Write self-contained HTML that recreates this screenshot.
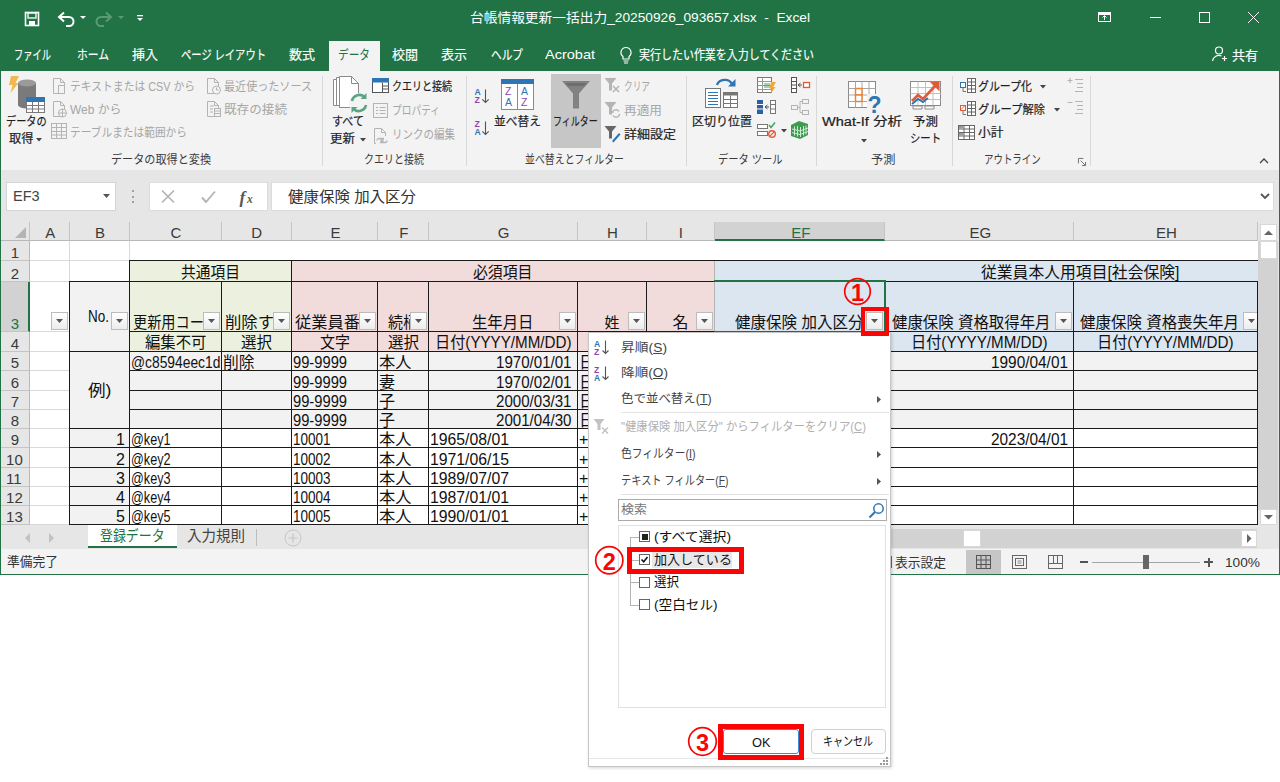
<!DOCTYPE html>
<html lang="ja"><head><meta charset="utf-8"><title>Excel</title><style>
html,body{margin:0;padding:0;background:#fff;}
body{width:1280px;height:782px;position:relative;overflow:hidden;font-family:"Liberation Sans","Noto Sans CJK JP",sans-serif;color:#222;}
div{position:absolute;box-sizing:border-box;}
.t{white-space:nowrap;line-height:1;}
.r{font-size:12px;color:#1e1e1e;-webkit-text-stroke:0.200px #1e1e1e;}
.rl{font-size:12px;color:#3c3c3c;}
.rd{font-size:12px;color:#a6a6a6;}
.c{font-size:15px;color:#111;white-space:nowrap;line-height:17px;overflow:hidden;}
.cc{overflow:hidden;white-space:nowrap;font-size:15px;line-height:17px;color:transparent;}
.cc span{position:absolute;top:0;font-size:16px;color:#111;transform-origin:0 0;}
.cc span.hd{top:1px;font-size:15px;color:#3a3a3a;}
.f{display:inline-block;}
div.f{display:block;}
svg{position:absolute;overflow:visible;}
</style></head><body>
<div style="left:0px;top:0px;width:1280px;height:575px;background:#f3f3f3;"></div>
<div style="left:0px;top:0px;width:1280px;height:71px;background:#217346;"></div>
<div class="t f" style="left:470px;top:11px;color:#fff;font-size:13px;white-space:pre;--w:340;transform-origin:0 0;">台帳情報更新一括出力_20250926_093657.xlsx  -  Excel</div>
<svg style="left:24px;top:10px" width="130" height="18" viewBox="0 0 130 18">
<rect x="1.5" y="2.5" width="13" height="13" fill="none" stroke="#fff" stroke-width="1.6"/>
<rect x="4" y="3" width="8" height="5" fill="none" stroke="#fff" stroke-width="1.3"/>
<rect x="5" y="11" width="6" height="4" fill="#fff"/>
<path d="M36 7 h9 a4.5 4.500 0 0 1 0 9 h-3" fill="none" stroke="#fff" stroke-width="2"/>
<path d="M40 2.500 L35 7 L40 11.500" fill="none" stroke="#fff" stroke-width="2"/>
<path d="M56 6 h6 l-3 3 z" fill="#fff"/>
<path d="M86 7 h-9 a4.500 4.500 0 0 0 0 9 h3" fill="none" stroke="#5c9a77" stroke-width="2"/>
<path d="M82 2.500 L87 7 L82 11.500" fill="none" stroke="#5c9a77" stroke-width="2"/>
<path d="M94 6 h6 l-3 3 z" fill="#5c9a77"/>
<rect x="113" y="5" width="6" height="1.300" fill="#fff"/>
<path d="M113 8 h6 l-3 3 z" fill="#fff"/>
</svg>
<svg style="left:1090px;top:7px" width="180" height="22" viewBox="0 0 180 22">
<rect x="8.500" y="5.500" width="12" height="9" fill="none" stroke="#fff" stroke-width="1"/>
<rect x="8.500" y="5.500" width="12" height="2.500" fill="#fff"/>
<path d="M14.500 13 v-4 M12.500 10.500 l2 -2 l2 2" stroke="#fff" fill="none" stroke-width="1"/>
<path d="M60 10.500 h11" stroke="#fff" stroke-width="1"/>
<rect x="109.500" y="5.500" width="10" height="10" fill="none" stroke="#fff" stroke-width="1"/>
<path d="M158 5 l11 11 M169 5 l-11 11" stroke="#fff" stroke-width="1"/>
</svg>
<div style="left:329px;top:41px;width:51px;height:30px;background:#f3f3f3;"></div>
<div class="t f" style="left:14px;top:48px;color:#fff;font-size:13px;-webkit-text-stroke:0.18px #fff;--w:37;transform-origin:0 0;">ファイル</div>
<div class="t f" style="left:77px;top:48px;color:#fff;font-size:13px;-webkit-text-stroke:0.18px #fff;--w:32;transform-origin:0 0;">ホーム</div>
<div class="t f" style="left:132px;top:48px;color:#fff;font-size:13px;-webkit-text-stroke:0.18px #fff;--w:26;transform-origin:0 0;">挿入</div>
<div class="t f" style="left:181px;top:48px;color:#fff;font-size:13px;-webkit-text-stroke:0.18px #fff;--w:85;transform-origin:0 0;">ページ レイアウト</div>
<div class="t f" style="left:289px;top:48px;color:#fff;font-size:13px;-webkit-text-stroke:0.18px #fff;--w:26;transform-origin:0 0;">数式</div>
<div class="t f" style="left:392px;top:48px;color:#fff;font-size:13px;-webkit-text-stroke:0.18px #fff;--w:26;transform-origin:0 0;">校閲</div>
<div class="t f" style="left:441px;top:48px;color:#fff;font-size:13px;-webkit-text-stroke:0.18px #fff;--w:26;transform-origin:0 0;">表示</div>
<div class="t f" style="left:491px;top:48px;color:#fff;font-size:13px;-webkit-text-stroke:0.18px #fff;--w:32;transform-origin:0 0;">ヘルプ</div>
<div id="f0" class="t f" style="left:545px;top:48px;color:#fff;font-size:13px;--w:50;transform-origin:0 0;transform:scaleX(1.1158);">Acrobat</div>
<div class="t f" style="left:338px;top:48px;color:#217346;font-size:13px;--w:32;transform-origin:0 0;">データ</div>
<svg style="left:619px;top:45.500px" width="14" height="20" viewBox="0 0 14 20">
<path d="M7 1.500 a5 5 0 0 1 3 9 v2.500 h-6 v-2.500 a5 5 0 0 1 3 -9 z" fill="none" stroke="#fff" stroke-width="1.200"/>
<path d="M4.500 15 h5 M5 17 h4" stroke="#fff" stroke-width="1.200"/></svg>
<div class="t f" style="left:639px;top:48px;color:#fff;font-size:13px;-webkit-text-stroke:0.18px #fff;--w:175;transform-origin:0 0;">実行したい作業を入力してください</div>
<svg style="left:1211px;top:45px" width="18" height="18" viewBox="0 0 18 18">
<circle cx="8" cy="5.500" r="3.500" fill="none" stroke="#fff" stroke-width="1.200"/>
<path d="M1.500 16 a6.500 6.500 0 0 1 9 -5" fill="none" stroke="#fff" stroke-width="1.200"/>
<path d="M11 13.500 h5 M13.500 11 v5" stroke="#fff" stroke-width="1.200"/></svg>
<div class="t f" style="left:1232px;top:49px;color:#fff;font-size:13px;-webkit-text-stroke:0.18px #fff;--w:26;transform-origin:0 0;">共有</div>
<div style="left:322px;top:76px;width:1px;height:90px;background:#d8d8d8;"></div>
<div style="left:466px;top:76px;width:1px;height:90px;background:#d8d8d8;"></div>
<div style="left:686px;top:76px;width:1px;height:90px;background:#d8d8d8;"></div>
<div style="left:816px;top:76px;width:1px;height:90px;background:#d8d8d8;"></div>
<div style="left:952px;top:76px;width:1px;height:90px;background:#d8d8d8;"></div>
<div style="left:1090px;top:76px;width:1px;height:90px;background:#d8d8d8;"></div>
<div class="t rl f" style="left:111.0px;top:154px;--w:100;transform-origin:0 0;">データの取得と変換</div>
<div class="t rl f" style="left:364.0px;top:154px;--w:60;transform-origin:0 0;">クエリと接続</div>
<div class="t rl f" style="left:525.0px;top:154px;--w:99;transform-origin:0 0;">並べ替えとフィルター</div>
<div class="t rl f" style="left:717.7px;top:154px;--w:64.6;transform-origin:0 0;">データ ツール</div>
<div class="t rl f" style="left:870.75px;top:154px;--w:24.5;transform-origin:0 0;">予測</div>
<div class="t rl f" style="left:983.65px;top:154px;--w:56.7;transform-origin:0 0;">アウトライン</div>
<svg style="left:7px;top:75px" width="40" height="42" viewBox="0 0 40 42">
<path d="M4 1 h8 l-3.500 7 h3 l-8 10 l2 -8 h-3.500 z" fill="#f0b84e"/>
<path d="M11 8 v22 a9 3.500 0 0 0 18 0 v-22" fill="#7a7a7a"/>
<ellipse cx="20" cy="8" rx="9" ry="3.500" fill="#9a9a9a"/>
<rect x="19.500" y="22.500" width="18" height="15" fill="#fff" stroke="#7a7a7a" stroke-width="1"/>
<rect x="19.500" y="22.500" width="18" height="4" fill="#2e75b6" stroke="#2e75b6" stroke-width="1"/>
<path d="M19.500 30.500 h18 M19.500 34 h18 M25.500 26.500 v11 M31.500 26.500 v11" stroke="#7a7a7a" stroke-width="1"/>
</svg>
<div class="t r f" style="left:6px;top:116px;--w:40.7;transform-origin:0 0;">データの</div>
<div class="t r f" style="left:9px;top:133px;--w:24.5;transform-origin:0 0;">取得</div>
<svg style="left:36px;top:138px" width="6" height="4"><path d="M0 0 h6 l-3 3.500 z" fill="#444"/></svg>
<svg style="left:52px;top:77px" width="16" height="18" viewBox="0 0 16 18"><path d="M1.500 1.500 h7 l4 4 v11 h-11 z M8.500 1.500 v4 h4" fill="none" stroke="#b4b4b4" stroke-width="1"/><rect x="6.500" y="8.500" width="6" height="8" fill="#f3f3f3" stroke="#b4b4b4"/></svg>
<div class="t rd f" style="left:70px;top:81px;--w:125;transform-origin:0 0;">テキストまたは CSV から</div>
<svg style="left:52px;top:100px" width="16" height="18" viewBox="0 0 16 18"><path d="M1.500 1.500 h7 l4 4 v11 h-11 z M8.500 1.500 v4 h4" fill="none" stroke="#b4b4b4" stroke-width="1"/><circle cx="10.500" cy="13" r="4" fill="#f3f3f3" stroke="#b4b4b4"/><path d="M6.500 13 h8 M10.500 9 v8" stroke="#b4b4b4"/></svg>
<div class="t rd f" style="left:70px;top:104px;--w:51.5;transform-origin:0 0;">Web から</div>
<svg style="left:50px;top:122px" width="18" height="18" viewBox="0 0 18 18"><rect x="1.500" y="1.500" width="15" height="15" fill="none" stroke="#b4b4b4"/><path d="M1.500 5.500 h15 M1.500 9.500 h15 M1.500 13 h15 M6.500 1.500 v15 M11.500 1.500 v15" stroke="#b4b4b4"/></svg>
<div class="t rd f" style="left:70px;top:127px;--w:117;transform-origin:0 0;">テーブルまたは範囲から</div>
<svg style="left:206px;top:77px" width="16" height="18" viewBox="0 0 16 18"><path d="M1.500 1.500 h7 l4 4 v11 h-11 z M8.500 1.500 v4 h4" fill="none" stroke="#b4b4b4" stroke-width="1"/><circle cx="10.500" cy="13" r="4" fill="#f3f3f3" stroke="#b4b4b4"/><path d="M10.500 10.500 v2.500 h2" fill="none" stroke="#b4b4b4"/></svg>
<div class="t rd f" style="left:224px;top:81px;--w:88;transform-origin:0 0;">最近使ったソース</div>
<svg style="left:206px;top:100px" width="16" height="18" viewBox="0 0 16 18"><path d="M1.500 1.500 h7 l4 4 v11 h-11 z M8.500 1.500 v4 h4" fill="none" stroke="#b4b4b4" stroke-width="1"/><path d="M4 6 h4 M4 9 h3 M4 12 h3" stroke="#b4b4b4"/><rect x="8.500" y="8.500" width="6" height="8" fill="#f3f3f3" stroke="#b4b4b4"/><path d="M8.500 11 h6 M8.500 13.500 h6" stroke="#b4b4b4"/></svg>
<div class="t rd f" style="left:224px;top:104px;--w:63;transform-origin:0 0;">既存の接続</div>
<svg style="left:332px;top:76px" width="38" height="38" viewBox="0 0 38 38">
<path d="M1.500 3.500 h13 l6 6 v20 h-19 z" fill="#fff" stroke="#8a8a8a"/>
<path d="M4.500 1.500 h13 l6 6 v22 h-19 z" fill="#fff" stroke="#8a8a8a"/>
<path d="M7.500 0.500 h12 l7 7 v24 h-19 z" fill="#fff" stroke="#8a8a8a"/>
<path d="M19.500 0.500 v7 h7" fill="none" stroke="#8a8a8a"/>
<circle cx="27" cy="27" r="10" fill="#f3f3f3"/>
<path d="M20 25 a7.500 7.500 0 0 1 13 -3.500" fill="none" stroke="#58a582" stroke-width="2.600"/>
<path d="M34.500 17 v6 h-6 z" fill="#58a582"/>
<path d="M34 29 a7.500 7.500 0 0 1 -13 3.500" fill="none" stroke="#58a582" stroke-width="2.600"/>
<path d="M19.500 37 v-6 h6 z" fill="#58a582"/>
</svg>
<div class="t r f" style="left:332px;top:116px;--w:32;transform-origin:0 0;">すべて</div>
<div class="t r f" style="left:330px;top:133px;--w:25;transform-origin:0 0;">更新</div>
<svg style="left:360px;top:138px" width="6" height="4"><path d="M0 0 h6 l-3 3.500 z" fill="#444"/></svg>
<svg style="left:372px;top:78px" width="18" height="16" viewBox="0 0 18 16"><rect x="0.500" y="0.500" width="16" height="14" fill="#fff" stroke="#555"/><rect x="0.500" y="0.500" width="16" height="3.500" fill="#2e75b6" stroke="#2e75b6"/><path d="M10.500 4.500 v10 M10.500 8 h6 M10.500 11 h6" stroke="#555"/></svg>
<div class="t r f" style="left:392px;top:81px;--w:60;transform-origin:0 0;">クエリと接続</div>
<svg style="left:373px;top:103px" width="16" height="16" viewBox="0 0 16 16"><rect x="0.500" y="0.500" width="14" height="14" fill="none" stroke="#b4b4b4"/><path d="M3 4.500 h2 M6.500 4.500 h6 M3 7.500 h2 M6.500 7.500 h6 M3 10.500 h2 M6.500 10.500 h6" stroke="#b4b4b4"/></svg>
<div class="t rd f" style="left:392px;top:105px;--w:48;transform-origin:0 0;">プロパティ</div>
<svg style="left:373px;top:127px" width="16" height="18" viewBox="0 0 16 18"><path d="M1.500 1.500 h7 l4 4 v11 h-11 z M8.500 1.500 v4 h4" fill="none" stroke="#b4b4b4" stroke-width="1"/><rect x="3" y="9" width="11" height="8" fill="#f3f3f3" stroke="none"/><path d="M4 13.500 a2 2 0 0 1 2 -2 h2 a2 2 0 0 1 0 4 h-1 M14 13.500 a2 2 0 0 1 -2 2 h-2 a2 2 0 0 1 0 -4 h1" fill="none" stroke="#b4b4b4" stroke-width="1.300"/></svg>
<div class="t rd f" style="left:392px;top:129px;--w:63;transform-origin:0 0;">リンクの編集</div>
<svg style="left:474px;top:88px" width="18" height="18" viewBox="0 0 18 18"><text x="0.500" y="7.200" font-size="8.600" font-weight="bold" font-family="Liberation Sans" fill="#2e75b6">A</text><text x="0.500" y="15" font-size="8.600" font-weight="bold" font-family="Liberation Sans" fill="#8e44ad">Z</text><path d="M11.500 1.500 v13 M8.300 11.300 l3.200 3.200 l3.200 -3.200" fill="none" stroke="#555" stroke-width="1.100"/></svg>
<svg style="left:474px;top:120px" width="18" height="18" viewBox="0 0 18 18"><text x="0.500" y="7.200" font-size="8.600" font-weight="bold" font-family="Liberation Sans" fill="#8e44ad">Z</text><text x="0.500" y="15" font-size="8.600" font-weight="bold" font-family="Liberation Sans" fill="#2e75b6">A</text><path d="M11.500 1.500 v13 M8.300 11.300 l3.200 3.200 l3.200 -3.200" fill="none" stroke="#555" stroke-width="1.100"/></svg>
<svg style="left:501px;top:79px" width="34" height="32" viewBox="0 0 34 32">
<rect x="0.500" y="0.500" width="32" height="30" fill="#fff" stroke="#8a8a8a"/>
<rect x="0.500" y="0.500" width="32" height="4" fill="#2e75b6" stroke="#2e75b6"/>
<path d="M16.500 4.500 v26" stroke="#8a8a8a"/>
<text x="4" y="16" font-size="10.500" font-family="Liberation Sans" fill="#8e44ad">Z</text>
<text x="4" y="27" font-size="10.500" font-family="Liberation Sans" fill="#2e75b6">A</text>
<text x="20" y="16" font-size="10.500" font-family="Liberation Sans" fill="#2e75b6">A</text>
<text x="20" y="27" font-size="10.500" font-family="Liberation Sans" fill="#8e44ad">Z</text>
</svg>
<div class="t r f" style="left:494px;top:116px;--w:47;transform-origin:0 0;">並べ替え</div>
<div style="left:551px;top:74px;width:50px;height:74px;background:#c6c6c6;"></div>
<svg style="left:561px;top:80px" width="30" height="30" viewBox="0 0 30 30"><path d="M1 1 h28 l-11 12.500 v15 h-6 v-15 z" fill="#828282"/><path d="M4.500 3 h21 l-2.500 3 h-16 z" fill="#6e6e6e"/></svg>
<div class="t r f" style="left:553px;top:116px;--w:44.6;transform-origin:0 0;">フィルター</div>
<svg style="left:604px;top:77px" width="18" height="18" viewBox="0 0 18 18"><path d="M0.500 1 h12 l-4.500 5.500 v7 h-3 v-7 z" fill="#b4b4b4"/><path d="M9 9 l6 6 M15 9 l-6 6" stroke="#b4b4b4" stroke-width="1.600"/></svg>
<div class="t rd f" style="left:624px;top:81px;--w:26;transform-origin:0 0;">クリア</div>
<svg style="left:604px;top:101px" width="18" height="18" viewBox="0 0 18 18"><path d="M0.500 1 h12 l-4.500 5.500 v7 h-3 v-7 z" fill="#b4b4b4"/><path d="M8.500 12 a3.500 3.500 0 0 1 6.500 -1.500 M15.500 13 a3.500 3.500 0 0 1 -6.500 1.500" fill="none" stroke="#b4b4b4" stroke-width="1.400"/></svg>
<div class="t rd f" style="left:624px;top:105px;--w:38;transform-origin:0 0;">再適用</div>
<svg style="left:604px;top:125px" width="18" height="18" viewBox="0 0 18 18"><path d="M0.500 1 h12 l-4.500 5.500 v7 h-3 v-7 z" fill="#666"/><path d="M8 16 l7 -8 l1.500 1.500 l-7 8 z" fill="#2e75b6"/></svg>
<div class="t r f" style="left:624px;top:129px;--w:52;transform-origin:0 0;">詳細設定</div>
<svg style="left:705px;top:76px" width="36" height="36" viewBox="0 0 36 36">
<path d="M12 9 a8 7 0 0 1 15 -1" fill="none" stroke="#2e75b6" stroke-width="2.400"/>
<path d="M30.500 3 v7.500 h-7.500 z" fill="#2e75b6"/>
<rect x="0.500" y="12.500" width="15" height="19" fill="#fff" stroke="#777"/>
<path d="M3 16.500 h10 M3 19.500 h10 M3 22.500 h10 M3 25.500 h10 M3 28.500 h10" stroke="#2e75b6" stroke-width="1.200"/>
<rect x="18.500" y="16.500" width="14" height="15" fill="#fff" stroke="#777"/>
<rect x="18.500" y="16.500" width="14" height="3" fill="#777"/>
<path d="M25.500 19.500 v12 M18.500 23.500 h14 M18.500 27.500 h14" stroke="#777"/>
</svg>
<div class="t r f" style="left:692px;top:116px;--w:60;transform-origin:0 0;">区切り位置</div>
<svg style="left:757px;top:77px" width="20" height="18" viewBox="0 0 20 18">
<rect x="0.500" y="0.500" width="14" height="15" fill="#fff" stroke="#777"/><path d="M0.500 4.500 h14 M0.500 8.500 h14 M0.500 12.500 h14 M5.500 0.500 v15" stroke="#999"/>
<rect x="7" y="6" width="6" height="5" fill="#4aa564" opacity=".5"/>
<path d="M14 5 h5 l-3 5 h2.500 l-5 7 l1.200 -5.500 h-2.200 z" fill="#f0a830"/></svg>
<svg style="left:757px;top:99px" width="20" height="18" viewBox="0 0 20 18">
<rect x="0" y="1" width="6" height="14" fill="#2e5f9e"/><path d="M0 5.500 h6 M0 10 h6" stroke="#fff"/>
<path d="M8 8 h4 M10.500 6 l-2.500 2 l2.500 2" stroke="#555" fill="none"/>
<rect x="13.500" y="1.500" width="5" height="13" fill="#fff" stroke="#777"/><path d="M13.500 5.500 h5 M13.500 10 h5" stroke="#777"/></svg>
<svg style="left:757px;top:121px" width="22" height="18" viewBox="0 0 22 18">
<rect x="0.500" y="3.500" width="10" height="4" fill="#fff" stroke="#777"/><rect x="0.500" y="10.500" width="10" height="4" fill="#fff" stroke="#777"/>
<path d="M12 4 l2 2.500 l4 -5" fill="none" stroke="#4aa564" stroke-width="1.600"/>
<circle cx="15" cy="13" r="3.300" fill="none" stroke="#e05a3a" stroke-width="1.400"/><path d="M12.700 15.300 l4.600 -4.600" stroke="#e05a3a" stroke-width="1.200"/></svg>
<svg style="left:781px;top:129px" width="6" height="4"><path d="M0 0 h6 l-3 3.500 z" fill="#444"/></svg>
<svg style="left:791px;top:77px" width="20" height="18" viewBox="0 0 20 18">
<rect x="0.500" y="0.500" width="5" height="15" fill="#fff" stroke="#555"/><path d="M0.500 4.500 h5 M0.500 8 h5 M0.500 11.500 h5" stroke="#555"/>
<path d="M7 8 h4 M9.500 6 l-2.500 2 l2.500 2" stroke="#555" fill="none"/>
<rect x="12.500" y="5.500" width="6" height="5" fill="#fff" stroke="#e05a3a" stroke-width="1.300"/></svg>
<svg style="left:791px;top:99px" width="20" height="18" viewBox="0 0 20 18">
<rect x="11.500" y="0.500" width="6" height="4" fill="none" stroke="#b4b4b4"/><rect x="0.500" y="6.500" width="6" height="4" fill="none" stroke="#b4b4b4"/><rect x="11.500" y="11.500" width="6" height="4" fill="none" stroke="#b4b4b4"/>
<path d="M6.500 8.500 h2.500 v-6 h2.500 M9 8.500 v5 h2.500" fill="none" stroke="#b4b4b4"/></svg>
<svg style="left:790px;top:120px" width="20" height="20" viewBox="0 0 20 20">
<path d="M1 5 l8 -4 l9 3 v11 l-8 4 l-9 -3 z" fill="#3d9b4f"/>
<path d="M4.500 6.500 v9 M7.500 6 v10.500 M10.500 7 v10 M13.500 6 v9.500 M16 5.500 v9 M2 9 l8 2 l8 -3 M2 12.500 l8 2 l8 -3" stroke="#cfe9d2" stroke-width="1" fill="none"/></svg>
<svg style="left:848px;top:81px" width="36" height="34" viewBox="0 0 36 34">
<rect x="0.500" y="0.500" width="27" height="26" fill="#fff" stroke="#8a8a8a"/>
<path d="M0.500 7.500 h27 M0.500 14 h27 M0.500 20.500 h27 M7.500 0.500 v26 M14 0.500 v26 M21 0.500 v26" stroke="#a8a8a8"/>
<rect x="7.500" y="7.500" width="6.500" height="6.500" fill="#fff" stroke="#e8853a" stroke-width="1.500"/>
<rect x="7.500" y="14" width="6.500" height="6.500" fill="#fff" stroke="#e8853a" stroke-width="1.500"/>
<rect x="19" y="13" width="17" height="21" fill="#f3f3f3" stroke="none"/>
<text x="19.500" y="32" font-size="23" font-weight="bold" font-family="Liberation Sans" fill="#2e75b6">?</text></svg>
<div class="t r f" style="left:822px;top:116px;--w:80;transform-origin:0 0;">What-If 分析</div>
<svg style="left:861px;top:139px" width="6" height="4"><path d="M0 0 h6 l-3 3.500 z" fill="#444"/></svg>
<svg style="left:910px;top:79px" width="34" height="34" viewBox="0 0 34 34">
<rect x="0.500" y="2.500" width="30" height="24" fill="#fff" stroke="#8a8a8a"/>
<path d="M0.500 8.500 h30 M0.500 14.500 h30 M0.500 20.500 h30 M8 2.500 v24 M15.500 2.500 v24 M23 2.500 v24" stroke="#c0c0c0"/>
<path d="M2 22 l6 -6 l5 4 l13 -14" fill="none" stroke="#e05a3a" stroke-width="2.600"/>
<path d="M20 3 h9.500 v9.500 z" fill="#e05a3a"/>
<path d="M2 25 l6 -5 l5 3 l5 -4" fill="none" stroke="#2e75b6" stroke-width="2"/>
<path d="M3 27 h9 v3 h-9 z M15 27 h9 v3 h-9 z" fill="#fff" stroke="#8a8a8a"/></svg>
<div class="t r f" style="left:913px;top:116px;--w:25;transform-origin:0 0;">予測</div>
<div class="t r f" style="left:910px;top:133px;--w:31;transform-origin:0 0;">シート</div>
<svg style="left:959px;top:78px" width="18" height="16" viewBox="0 0 18 16">
<rect x="1.500" y="4.500" width="5" height="5" fill="#fff" stroke="#2e75b6"/><path d="M4 9.500 v4 h3" fill="none" stroke="#777"/>
<rect x="8.500" y="0.500" width="8" height="14" fill="#fff" stroke="#666"/><path d="M8.500 4 h8 M8.500 7.500 h8 M8.500 11 h8 M12.500 0.500 v14" stroke="#666"/></svg>
<div class="t r f" style="left:978px;top:81px;--w:54;transform-origin:0 0;">グループ化</div>
<svg style="left:1040px;top:85px" width="6" height="4"><path d="M0 0 h6 l-3 3.500 z" fill="#444"/></svg>
<svg style="left:959px;top:101px" width="18" height="16" viewBox="0 0 18 16">
<rect x="1.500" y="4.500" width="5" height="5" fill="#fff" stroke="#e05a3a"/><path d="M2 8.500 l4 -4" stroke="#e05a3a"/><path d="M4 9.500 v4 h3" fill="none" stroke="#777"/>
<rect x="8.500" y="0.500" width="8" height="14" fill="#fff" stroke="#666"/><path d="M8.500 4 h8 M8.500 7.500 h8 M8.500 11 h8 M12.500 0.500 v14" stroke="#666"/></svg>
<div class="t r f" style="left:978px;top:104px;--w:67;transform-origin:0 0;">グループ解除</div>
<svg style="left:1054px;top:108px" width="6" height="4"><path d="M0 0 h6 l-3 3.500 z" fill="#444"/></svg>
<svg style="left:958px;top:125px" width="18" height="16" viewBox="0 0 18 16">
<rect x="0.500" y="0.500" width="16" height="14" fill="#fff" stroke="#666"/><path d="M0.500 4 h16 M0.500 7.500 h16 M0.500 11 h16 M6 0.500 v14 M11.500 0.500 v14" stroke="#666"/>
<rect x="1" y="1" width="4.500" height="2.500" fill="#999"/><rect x="1" y="8" width="4.500" height="2.500" fill="#999"/></svg>
<div class="t r f" style="left:978px;top:127px;--w:25.6;transform-origin:0 0;">小計</div>
<svg style="left:1068px;top:77px" width="16" height="16" viewBox="0 0 16 16"><path d="M2 1 v5 M-0.500 3.500 h5 M7 2.500 h8 M9 6.500 h6 M9 10.500 h6 M7 14.500 h8" stroke="#b4b4b4" stroke-width="1.200" fill="none"/></svg>
<svg style="left:1068px;top:99px" width="16" height="16" viewBox="0 0 16 16"><path d="M-0.500 3.500 h5 M7 2.500 h8 M9 6.500 h6 M9 10.500 h6 M7 14.500 h8" stroke="#b4b4b4" stroke-width="1.200" fill="none"/></svg>
<svg style="left:1078px;top:158px" width="8" height="8" viewBox="0 0 9 9"><path d="M0.500 6 v-5.500 h5.500 M3 3 l5 5 M8.500 4.500 v4 h-4" fill="none" stroke="#666"/></svg>
<svg style="left:1259px;top:157px" width="10" height="7" viewBox="0 0 10 7"><path d="M1 6 l4 -4 l4 4" fill="none" stroke="#444" stroke-width="1.300"/></svg>
<div style="left:1px;top:170px;width:1278px;height:71px;background:#e6e6e6;"></div>
<div style="left:6px;top:182px;width:110px;height:29px;background:#fff;border:1px solid #d4d4d4;"></div>
<div class="t" style="left:13px;top:189px;font-size:14.500px;color:#444;">EF3</div>
<svg style="left:103px;top:194px" width="8" height="5"><path d="M0 0 h7 l-3.500 4 z" fill="#555"/></svg>
<div style="left:131.5px;top:190px;width:2px;height:2px;background:#a0a0a0;"></div>
<div style="left:131.5px;top:195.5px;width:2px;height:2px;background:#a0a0a0;"></div>
<div style="left:131.5px;top:201px;width:2px;height:2px;background:#a0a0a0;"></div>
<div style="left:149px;top:182px;width:119px;height:29px;background:#fff;border:1px solid #dcdcdc;"></div>
<svg style="left:161px;top:189px" width="100" height="16" viewBox="0 0 100 16"><path d="M1 1.500 l12 12 M13 1.500 l-12 12" stroke="#b4b4b4" stroke-width="1.700"/><path d="M41 8.500 l4 4.500 l9 -10.500" fill="none" stroke="#b4b4b4" stroke-width="1.900"/><text x="78.500" y="13.500" font-size="17.500" font-style="italic" font-weight="bold" font-family="Liberation Serif" fill="#5a5a5a">f</text><text x="86" y="14" font-size="11.500" font-style="italic" font-weight="bold" font-family="Liberation Serif" fill="#5a5a5a">x</text></svg>
<div style="left:271px;top:182px;width:1003px;height:29px;background:#fff;border:1px solid #dcdcdc;"></div>
<div class="t f" style="left:288px;top:188.5px;font-size:15px;color:#333;--w:128;transform-origin:0 0;">健康保険 加入区分</div>
<svg style="left:1260px;top:193px" width="10" height="7" viewBox="0 0 10 7"><path d="M1 1 l4 4 l4 -4" fill="none" stroke="#555" stroke-width="1.800"/></svg>
<div style="left:30px;top:241px;width:1228px;height:284px;background:#fff;"></div>
<div style="left:30px;top:222px;width:40px;height:19px;background:#e6e6e6;border-right:1px solid #c4c4c4;border-bottom:1px solid #b8b8b8;"></div>
<div class="cc" style="left:30px;top:223px;width:40px;height:18px;"><span class="hd" style="left:15.22px;">A</span></div>
<div style="left:70px;top:222px;width:60px;height:19px;background:#e6e6e6;border-right:1px solid #c4c4c4;border-bottom:1px solid #b8b8b8;"></div>
<div class="cc" style="left:70px;top:223px;width:60px;height:18px;"><span class="hd" style="left:25.06px;">B</span></div>
<div style="left:130px;top:222px;width:92px;height:19px;background:#e6e6e6;border-right:1px solid #c4c4c4;border-bottom:1px solid #b8b8b8;"></div>
<div class="cc" style="left:130px;top:223px;width:92px;height:18px;"><span class="hd" style="left:40.56px;">C</span></div>
<div style="left:222px;top:222px;width:70px;height:19px;background:#e6e6e6;border-right:1px solid #c4c4c4;border-bottom:1px solid #b8b8b8;"></div>
<div class="cc" style="left:222px;top:223px;width:70px;height:18px;"><span class="hd" style="left:29.32px;">D</span></div>
<div style="left:292px;top:222px;width:86px;height:19px;background:#e6e6e6;border-right:1px solid #c4c4c4;border-bottom:1px solid #b8b8b8;"></div>
<div class="cc" style="left:292px;top:223px;width:86px;height:18px;"><span class="hd" style="left:38.54px;">E</span></div>
<div style="left:378px;top:222px;width:51px;height:19px;background:#e6e6e6;border-right:1px solid #c4c4c4;border-bottom:1px solid #b8b8b8;"></div>
<div class="cc" style="left:378px;top:223px;width:51px;height:18px;"><span class="hd" style="left:21.21px;">F</span></div>
<div style="left:429px;top:222px;width:149px;height:19px;background:#e6e6e6;border-right:1px solid #c4c4c4;border-bottom:1px solid #b8b8b8;"></div>
<div class="cc" style="left:429px;top:223px;width:149px;height:18px;"><span class="hd" style="left:68.85px;">G</span></div>
<div style="left:578px;top:222px;width:69px;height:19px;background:#e6e6e6;border-right:1px solid #c4c4c4;border-bottom:1px solid #b8b8b8;"></div>
<div class="cc" style="left:578px;top:223px;width:69px;height:18px;"><span class="hd" style="left:28.88px;">H</span></div>
<div style="left:647px;top:222px;width:68px;height:19px;background:#e6e6e6;border-right:1px solid #c4c4c4;border-bottom:1px solid #b8b8b8;"></div>
<div class="cc" style="left:647px;top:223px;width:68px;height:18px;"><span class="hd" style="left:31.83px;">I</span></div>
<div style="left:715px;top:222px;width:170px;height:19px;background:#d2d2d2;border-right:1px solid #c4c4c4;border-bottom:2px solid #217346;"></div>
<div class="cc" style="left:715px;top:223px;width:170px;height:18px;"><span class="hd" style="left:76.25px;color:#217346;">EF</span></div>
<div style="left:885px;top:222px;width:189px;height:19px;background:#e6e6e6;border-right:1px solid #c4c4c4;border-bottom:1px solid #b8b8b8;"></div>
<div class="cc" style="left:885px;top:223px;width:189px;height:18px;"><span class="hd" style="left:84.39px;">EG</span></div>
<div style="left:1074px;top:222px;width:184px;height:19px;background:#e6e6e6;border-right:1px solid #c4c4c4;border-bottom:1px solid #b8b8b8;"></div>
<div class="cc" style="left:1074px;top:223px;width:184px;height:18px;"><span class="hd" style="left:81.91px;">EH</span></div>
<div style="left:1px;top:222px;width:29px;height:19px;background:#e6e6e6;border-right:1px solid #c4c4c4;border-bottom:1px solid #b8b8b8;"></div>
<svg style="left:14px;top:226px" width="13" height="13"><path d="M12 1 v11 h-11 z" fill="#b4b4b4"/></svg>
<div style="left:1px;top:241px;width:29px;height:20px;background:#e6e6e6;border-bottom:1px solid #c4c4c4;border-right:1px solid #b8b8b8;"></div>
<div class="cc" style="left:1px;top:243px;width:29px;height:18px;"><span class="hd" style="left:9.78px;">1</span></div>
<div style="left:1px;top:261px;width:29px;height:21px;background:#e6e6e6;border-bottom:1px solid #c4c4c4;border-right:1px solid #b8b8b8;"></div>
<div class="cc" style="left:1px;top:264px;width:29px;height:18px;"><span class="hd" style="left:9.78px;">2</span></div>
<div style="left:1px;top:282px;width:29px;height:50px;background:#d2d2d2;border-bottom:1px solid #c4c4c4;border-right:2px solid #217346;"></div>
<div class="cc" style="left:1px;top:314px;width:29px;height:18px;"><span class="hd" style="left:9.78px;color:#217346;">3</span></div>
<div style="left:1px;top:332px;width:29px;height:20px;background:#e6e6e6;border-bottom:1px solid #c4c4c4;border-right:1px solid #b8b8b8;"></div>
<div class="cc" style="left:1px;top:334px;width:29px;height:18px;"><span class="hd" style="left:9.78px;">4</span></div>
<div style="left:1px;top:352px;width:29px;height:19px;background:#e6e6e6;border-bottom:1px solid #c4c4c4;border-right:1px solid #b8b8b8;"></div>
<div class="cc" style="left:1px;top:353px;width:29px;height:18px;"><span class="hd" style="left:9.78px;">5</span></div>
<div style="left:1px;top:371px;width:29px;height:20px;background:#e6e6e6;border-bottom:1px solid #c4c4c4;border-right:1px solid #b8b8b8;"></div>
<div class="cc" style="left:1px;top:373px;width:29px;height:18px;"><span class="hd" style="left:9.78px;">6</span></div>
<div style="left:1px;top:391px;width:29px;height:19px;background:#e6e6e6;border-bottom:1px solid #c4c4c4;border-right:1px solid #b8b8b8;"></div>
<div class="cc" style="left:1px;top:392px;width:29px;height:18px;"><span class="hd" style="left:9.78px;">7</span></div>
<div style="left:1px;top:410px;width:29px;height:19px;background:#e6e6e6;border-bottom:1px solid #c4c4c4;border-right:1px solid #b8b8b8;"></div>
<div class="cc" style="left:1px;top:411px;width:29px;height:18px;"><span class="hd" style="left:9.78px;">8</span></div>
<div style="left:1px;top:429px;width:29px;height:19px;background:#e6e6e6;border-bottom:1px solid #c4c4c4;border-right:1px solid #b8b8b8;"></div>
<div class="cc" style="left:1px;top:430px;width:29px;height:18px;"><span class="hd" style="left:9.78px;">9</span></div>
<div style="left:1px;top:448px;width:29px;height:20px;background:#e6e6e6;border-bottom:1px solid #c4c4c4;border-right:1px solid #b8b8b8;"></div>
<div class="cc" style="left:1px;top:450px;width:29px;height:18px;"><span class="hd" style="left:5.05px;">10</span></div>
<div style="left:1px;top:468px;width:29px;height:19px;background:#e6e6e6;border-bottom:1px solid #c4c4c4;border-right:1px solid #b8b8b8;"></div>
<div class="cc" style="left:1px;top:469px;width:29px;height:18px;"><span class="hd" style="left:5.05px;">11</span></div>
<div style="left:1px;top:487px;width:29px;height:19px;background:#e6e6e6;border-bottom:1px solid #c4c4c4;border-right:1px solid #b8b8b8;"></div>
<div class="cc" style="left:1px;top:488px;width:29px;height:18px;"><span class="hd" style="left:5.05px;">12</span></div>
<div style="left:1px;top:506px;width:29px;height:19px;background:#e6e6e6;border-bottom:1px solid #c4c4c4;border-right:1px solid #b8b8b8;"></div>
<div class="cc" style="left:1px;top:507px;width:29px;height:18px;"><span class="hd" style="left:5.05px;">13</span></div>
<div style="left:30px;top:260px;width:40px;height:1px;background:#d9d9d9;"></div>
<div style="left:30px;top:281px;width:40px;height:1px;background:#d9d9d9;"></div>
<div style="left:30px;top:331px;width:40px;height:1px;background:#d9d9d9;"></div>
<div style="left:30px;top:351px;width:40px;height:1px;background:#d9d9d9;"></div>
<div style="left:30px;top:370px;width:40px;height:1px;background:#d9d9d9;"></div>
<div style="left:30px;top:390px;width:40px;height:1px;background:#d9d9d9;"></div>
<div style="left:30px;top:409px;width:40px;height:1px;background:#d9d9d9;"></div>
<div style="left:30px;top:428px;width:40px;height:1px;background:#d9d9d9;"></div>
<div style="left:30px;top:447px;width:40px;height:1px;background:#d9d9d9;"></div>
<div style="left:30px;top:467px;width:40px;height:1px;background:#d9d9d9;"></div>
<div style="left:30px;top:486px;width:40px;height:1px;background:#d9d9d9;"></div>
<div style="left:30px;top:505px;width:40px;height:1px;background:#d9d9d9;"></div>
<div style="left:30px;top:524px;width:40px;height:1px;background:#d9d9d9;"></div>
<div style="left:69px;top:241px;width:1px;height:284px;background:#d9d9d9;"></div>
<div style="left:30px;top:260px;width:1227px;height:1px;background:#d9d9d9;"></div>
<div style="left:69px;top:281px;width:60px;height:1px;background:#d9d9d9;"></div>
<div style="left:129px;top:241px;width:1px;height:20px;background:#d9d9d9;"></div>
<div style="left:129px;top:260px;width:163px;height:22px;background:#ebf1de;border:1px solid #1a1a1a;"></div>
<div class="cc" style="left:130px;top:264px;width:161px;height:17px;"><span class="f" style="left:51px;--w:59;">共通項目</span></div>
<div style="left:291px;top:260px;width:424px;height:22px;background:#f2dcdb;border:1px solid #1a1a1a;"></div>
<div class="cc" style="left:292px;top:264px;width:422px;height:17px;"><span class="f" style="left:181.25px;--w:59.5;">必須項目</span></div>
<div style="left:714px;top:260px;width:544px;height:22px;background:#dce6f1;border:1px solid #1a1a1a;border-right:none;"></div>
<div class="cc" style="left:960px;top:264px;width:241px;height:17px;"><span class="f" style="left:21.25px;--w:198.5;">従業員本人用項目[社会保険]</span></div>
<div style="left:69px;top:281px;width:61px;height:71px;background:#f2f2f2;border:1px solid #1a1a1a;"></div>
<div class="cc" style="left:88px;top:308px;width:40px;height:17px;"><span class="f" style="left:0px;--w:21;">No.</span></div>
<div style="left:129px;top:281px;width:93px;height:51px;background:#ebf1de;border:1px solid #1a1a1a;"></div>
<div class="cc" style="left:130px;top:314px;width:73px;height:17px;"><span class="f" style="left:2.5px;--w:70.9;">更新用コー</span></div>
<div style="left:221px;top:281px;width:71px;height:51px;background:#ebf1de;border:1px solid #1a1a1a;"></div>
<div class="cc" style="left:222px;top:314px;width:51px;height:17px;"><span class="f" style="left:3px;--w:49.1;">削除す</span></div>
<div style="left:291px;top:281px;width:87px;height:51px;background:#f2dcdb;border:1px solid #1a1a1a;"></div>
<div class="cc" style="left:292px;top:314px;width:67px;height:17px;"><span class="f" style="left:3px;--w:65;">従業員番</span></div>
<div style="left:377px;top:281px;width:52px;height:51px;background:#f2dcdb;border:1px solid #1a1a1a;"></div>
<div class="cc" style="left:378px;top:314px;width:32px;height:17px;"><span class="f" style="left:9.5px;--w:30;">続柄</span></div>
<div style="left:428px;top:281px;width:150px;height:51px;background:#f2dcdb;border:1px solid #1a1a1a;"></div>
<div class="cc" style="left:429px;top:314px;width:148px;height:17px;"><span class="f" style="left:43.25px;--w:61.5;">生年月日</span></div>
<div style="left:577px;top:281px;width:70px;height:51px;background:#f2dcdb;border:1px solid #1a1a1a;"></div>
<div class="cc" style="left:578px;top:314px;width:68px;height:17px;"><span style="left:26.5px;font-size:15px;">姓</span></div>
<div style="left:646px;top:281px;width:69px;height:51px;background:#f2dcdb;border:1px solid #1a1a1a;"></div>
<div class="cc" style="left:647px;top:314px;width:67px;height:17px;"><span style="left:25.5px;">名</span></div>
<div style="left:714px;top:281px;width:171px;height:51px;background:#dce6f1;border:1px solid #1a1a1a;"></div>
<div class="cc" style="left:715px;top:314px;width:169px;height:17px;"><span class="f" style="left:20.25px;--w:128.5;">健康保険 加入区分</span></div>
<div style="left:884px;top:281px;width:190px;height:51px;background:#dce6f1;border:1px solid #1a1a1a;"></div>
<div class="cc" style="left:885px;top:314px;width:170px;height:17px;"><span class="f" style="left:6.5px;--w:158.5;">健康保険 資格取得年月</span></div>
<div style="left:1073px;top:281px;width:185px;height:51px;background:#dce6f1;border:1px solid #1a1a1a;"></div>
<div class="cc" style="left:1074px;top:314px;width:165px;height:17px;"><span class="f" style="left:6px;--w:159;">健康保険 資格喪失年月</span></div>
<div style="left:51px;top:312px;width:17px;height:18px;background:linear-gradient(#fff,#ececec);border:1px solid #bcbcbc;"></div>
<svg style="left:56px;top:319px" width="8" height="5"><path d="M0 0 h7 l-3.500 4 z" fill="#555"/></svg>
<div style="left:111px;top:312px;width:17px;height:18px;background:linear-gradient(#fff,#ececec);border:1px solid #bcbcbc;"></div>
<svg style="left:116px;top:319px" width="8" height="5"><path d="M0 0 h7 l-3.500 4 z" fill="#555"/></svg>
<div style="left:203px;top:312px;width:17px;height:18px;background:linear-gradient(#fff,#ececec);border:1px solid #bcbcbc;"></div>
<svg style="left:208px;top:319px" width="8" height="5"><path d="M0 0 h7 l-3.500 4 z" fill="#555"/></svg>
<div style="left:273px;top:312px;width:17px;height:18px;background:linear-gradient(#fff,#ececec);border:1px solid #bcbcbc;"></div>
<svg style="left:278px;top:319px" width="8" height="5"><path d="M0 0 h7 l-3.500 4 z" fill="#555"/></svg>
<div style="left:359px;top:312px;width:17px;height:18px;background:linear-gradient(#fff,#ececec);border:1px solid #bcbcbc;"></div>
<svg style="left:364px;top:319px" width="8" height="5"><path d="M0 0 h7 l-3.500 4 z" fill="#555"/></svg>
<div style="left:410px;top:312px;width:17px;height:18px;background:linear-gradient(#fff,#ececec);border:1px solid #bcbcbc;"></div>
<svg style="left:415px;top:319px" width="8" height="5"><path d="M0 0 h7 l-3.500 4 z" fill="#555"/></svg>
<div style="left:559px;top:312px;width:17px;height:18px;background:linear-gradient(#fff,#ececec);border:1px solid #bcbcbc;"></div>
<svg style="left:564px;top:319px" width="8" height="5"><path d="M0 0 h7 l-3.500 4 z" fill="#555"/></svg>
<div style="left:628px;top:312px;width:17px;height:18px;background:linear-gradient(#fff,#ececec);border:1px solid #bcbcbc;"></div>
<svg style="left:633px;top:319px" width="8" height="5"><path d="M0 0 h7 l-3.500 4 z" fill="#555"/></svg>
<div style="left:696px;top:312px;width:17px;height:18px;background:linear-gradient(#fff,#ececec);border:1px solid #bcbcbc;"></div>
<svg style="left:701px;top:319px" width="8" height="5"><path d="M0 0 h7 l-3.500 4 z" fill="#555"/></svg>
<div style="left:866px;top:312px;width:17px;height:18px;background:linear-gradient(#fff,#ececec);border:1px solid #bcbcbc;"></div>
<svg style="left:871px;top:319px" width="8" height="5"><path d="M0 0 h7 l-3.500 4 z" fill="#555"/></svg>
<div style="left:1055px;top:312px;width:17px;height:18px;background:linear-gradient(#fff,#ececec);border:1px solid #bcbcbc;"></div>
<svg style="left:1060px;top:319px" width="8" height="5"><path d="M0 0 h7 l-3.500 4 z" fill="#555"/></svg>
<div style="left:1243px;top:312px;width:14px;height:18px;background:linear-gradient(#fff,#ececec);border:1px solid #bcbcbc;border-right:none;"></div>
<svg style="left:1248px;top:319px" width="8" height="5"><path d="M0 0 h7 l-3.500 4 z" fill="#555"/></svg>
<div style="left:129px;top:331px;width:93px;height:21px;background:#ebf1de;border:1px solid #1a1a1a;"></div>
<div class="cc" style="left:130px;top:334px;width:91px;height:17px;"><span class="f" style="left:14.75px;--w:61.5;">編集不可</span></div>
<div style="left:221px;top:331px;width:71px;height:21px;background:#ebf1de;border:1px solid #1a1a1a;"></div>
<div class="cc" style="left:222px;top:334px;width:69px;height:17px;"><span class="f" style="left:19px;--w:31;">選択</span></div>
<div style="left:291px;top:331px;width:87px;height:21px;background:#f2dcdb;border:1px solid #1a1a1a;"></div>
<div class="cc" style="left:292px;top:334px;width:85px;height:17px;"><span class="f" style="left:27.5px;--w:30;">文字</span></div>
<div style="left:377px;top:331px;width:52px;height:21px;background:#f2dcdb;border:1px solid #1a1a1a;"></div>
<div class="cc" style="left:378px;top:334px;width:50px;height:17px;"><span class="f" style="left:9.5px;--w:31;">選択</span></div>
<div style="left:428px;top:331px;width:150px;height:21px;background:#f2dcdb;border:1px solid #1a1a1a;"></div>
<div class="cc" style="left:429px;top:334px;width:148px;height:17px;"><span class="f" style="left:5.75px;--w:136.5;">日付(YYYY/MM/DD)</span></div>
<div style="left:577px;top:331px;width:70px;height:21px;background:#f2dcdb;border:1px solid #1a1a1a;"></div>
<div style="left:646px;top:331px;width:69px;height:21px;background:#f2dcdb;border:1px solid #1a1a1a;"></div>
<div style="left:714px;top:331px;width:171px;height:21px;background:#dce6f1;border:1px solid #1a1a1a;"></div>
<div style="left:884px;top:331px;width:190px;height:21px;background:#dce6f1;border:1px solid #1a1a1a;"></div>
<div class="cc" style="left:885px;top:334px;width:188px;height:17px;"><span class="f" style="left:25.75px;--w:136.5;">日付(YYYY/MM/DD)</span></div>
<div style="left:1073px;top:331px;width:185px;height:21px;background:#dce6f1;border:1px solid #1a1a1a;"></div>
<div class="cc" style="left:1074px;top:334px;width:183px;height:17px;"><span class="f" style="left:23.25px;--w:136.5;">日付(YYYY/MM/DD)</span></div>
<div style="left:69px;top:351px;width:61px;height:78px;background:#f2f2f2;border:1px solid #1a1a1a;"></div>
<div class="cc" style="left:70px;top:382.0px;width:59px;height:17px;"><span class="f" style="left:17.75px;--w:23.5;">例)</span></div>
<div style="left:129px;top:351px;width:93px;height:20px;background:#f2f2f2;border:1px solid #1a1a1a;"></div>
<div class="cc" style="left:130px;top:354px;width:91px;height:17px;"><span class="f" style="left:1px;--w:89.4;">@c8594eec1d</span></div>
<div style="left:221px;top:351px;width:71px;height:20px;background:#f2f2f2;border:1px solid #1a1a1a;"></div>
<div class="cc" style="left:222px;top:354px;width:69px;height:17px;"><span class="f" style="left:1px;--w:31.5;">削除</span></div>
<div style="left:291px;top:351px;width:87px;height:20px;background:#f2f2f2;border:1px solid #1a1a1a;"></div>
<div class="cc" style="left:292px;top:354px;width:85px;height:17px;"><span class="f" style="left:1px;--w:54;">99-9999</span></div>
<div style="left:377px;top:351px;width:52px;height:20px;background:#f2f2f2;border:1px solid #1a1a1a;"></div>
<div class="cc" style="left:378px;top:354px;width:50px;height:17px;"><span class="f" style="left:1px;--w:32.5;">本人</span></div>
<div style="left:428px;top:351px;width:150px;height:20px;background:#f2f2f2;border:1px solid #1a1a1a;"></div>
<div class="cc" style="left:429px;top:354px;width:148px;height:17px;"><span class="f" style="left:66.5px;--w:75.5;">1970/01/01</span></div>
<div style="left:577px;top:351px;width:70px;height:20px;background:#f2f2f2;border:1px solid #1a1a1a;"></div>
<div class="cc" style="left:578px;top:354px;width:68px;height:17px;"><span style="left:1px;">日</span></div>
<div style="left:646px;top:351px;width:69px;height:20px;background:#f2f2f2;border:1px solid #1a1a1a;"></div>
<div style="left:714px;top:351px;width:171px;height:20px;background:#f2f2f2;border:1px solid #1a1a1a;"></div>
<div style="left:884px;top:351px;width:190px;height:20px;background:#f2f2f2;border:1px solid #1a1a1a;"></div>
<div class="cc" style="left:885px;top:354px;width:188px;height:17px;"><span class="f" style="left:106px;--w:77;">1990/04/01</span></div>
<div style="left:1073px;top:351px;width:185px;height:20px;background:#f2f2f2;border:1px solid #1a1a1a;"></div>
<div style="left:129px;top:370px;width:93px;height:21px;background:#f2f2f2;border:1px solid #1a1a1a;"></div>
<div style="left:221px;top:370px;width:71px;height:21px;background:#f2f2f2;border:1px solid #1a1a1a;"></div>
<div style="left:291px;top:370px;width:87px;height:21px;background:#f2f2f2;border:1px solid #1a1a1a;"></div>
<div class="cc" style="left:292px;top:374px;width:85px;height:17px;"><span class="f" style="left:1px;--w:54;">99-9999</span></div>
<div style="left:377px;top:370px;width:52px;height:21px;background:#f2f2f2;border:1px solid #1a1a1a;"></div>
<div class="cc" style="left:378px;top:374px;width:50px;height:17px;"><span style="left:1px;">妻</span></div>
<div style="left:428px;top:370px;width:150px;height:21px;background:#f2f2f2;border:1px solid #1a1a1a;"></div>
<div class="cc" style="left:429px;top:374px;width:148px;height:17px;"><span class="f" style="left:66.5px;--w:75.5;">1970/02/01</span></div>
<div style="left:577px;top:370px;width:70px;height:21px;background:#f2f2f2;border:1px solid #1a1a1a;"></div>
<div class="cc" style="left:578px;top:374px;width:68px;height:17px;"><span style="left:1px;">日</span></div>
<div style="left:646px;top:370px;width:69px;height:21px;background:#f2f2f2;border:1px solid #1a1a1a;"></div>
<div style="left:714px;top:370px;width:171px;height:21px;background:#f2f2f2;border:1px solid #1a1a1a;"></div>
<div style="left:884px;top:370px;width:190px;height:21px;background:#f2f2f2;border:1px solid #1a1a1a;"></div>
<div style="left:1073px;top:370px;width:185px;height:21px;background:#f2f2f2;border:1px solid #1a1a1a;"></div>
<div style="left:129px;top:390px;width:93px;height:20px;background:#f2f2f2;border:1px solid #1a1a1a;"></div>
<div style="left:221px;top:390px;width:71px;height:20px;background:#f2f2f2;border:1px solid #1a1a1a;"></div>
<div style="left:291px;top:390px;width:87px;height:20px;background:#f2f2f2;border:1px solid #1a1a1a;"></div>
<div class="cc" style="left:292px;top:393px;width:85px;height:17px;"><span class="f" style="left:1px;--w:54;">99-9999</span></div>
<div style="left:377px;top:390px;width:52px;height:20px;background:#f2f2f2;border:1px solid #1a1a1a;"></div>
<div class="cc" style="left:378px;top:393px;width:50px;height:17px;"><span style="left:1px;">子</span></div>
<div style="left:428px;top:390px;width:150px;height:20px;background:#f2f2f2;border:1px solid #1a1a1a;"></div>
<div class="cc" style="left:429px;top:393px;width:148px;height:17px;"><span class="f" style="left:66.5px;--w:75.5;">2000/03/31</span></div>
<div style="left:577px;top:390px;width:70px;height:20px;background:#f2f2f2;border:1px solid #1a1a1a;"></div>
<div class="cc" style="left:578px;top:393px;width:68px;height:17px;"><span style="left:1px;">日</span></div>
<div style="left:646px;top:390px;width:69px;height:20px;background:#f2f2f2;border:1px solid #1a1a1a;"></div>
<div style="left:714px;top:390px;width:171px;height:20px;background:#f2f2f2;border:1px solid #1a1a1a;"></div>
<div style="left:884px;top:390px;width:190px;height:20px;background:#f2f2f2;border:1px solid #1a1a1a;"></div>
<div style="left:1073px;top:390px;width:185px;height:20px;background:#f2f2f2;border:1px solid #1a1a1a;"></div>
<div style="left:129px;top:409px;width:93px;height:20px;background:#f2f2f2;border:1px solid #1a1a1a;"></div>
<div style="left:221px;top:409px;width:71px;height:20px;background:#f2f2f2;border:1px solid #1a1a1a;"></div>
<div style="left:291px;top:409px;width:87px;height:20px;background:#f2f2f2;border:1px solid #1a1a1a;"></div>
<div class="cc" style="left:292px;top:412px;width:85px;height:17px;"><span class="f" style="left:1px;--w:54;">99-9999</span></div>
<div style="left:377px;top:409px;width:52px;height:20px;background:#f2f2f2;border:1px solid #1a1a1a;"></div>
<div class="cc" style="left:378px;top:412px;width:50px;height:17px;"><span style="left:1px;">子</span></div>
<div style="left:428px;top:409px;width:150px;height:20px;background:#f2f2f2;border:1px solid #1a1a1a;"></div>
<div class="cc" style="left:429px;top:412px;width:148px;height:17px;"><span class="f" style="left:66.5px;--w:75.5;">2001/04/30</span></div>
<div style="left:577px;top:409px;width:70px;height:20px;background:#f2f2f2;border:1px solid #1a1a1a;"></div>
<div class="cc" style="left:578px;top:412px;width:68px;height:17px;"><span style="left:1px;">日</span></div>
<div style="left:646px;top:409px;width:69px;height:20px;background:#f2f2f2;border:1px solid #1a1a1a;"></div>
<div style="left:714px;top:409px;width:171px;height:20px;background:#f2f2f2;border:1px solid #1a1a1a;"></div>
<div style="left:884px;top:409px;width:190px;height:20px;background:#f2f2f2;border:1px solid #1a1a1a;"></div>
<div style="left:1073px;top:409px;width:185px;height:20px;background:#f2f2f2;border:1px solid #1a1a1a;"></div>
<div style="left:69px;top:428px;width:61px;height:20px;background:#f2f2f2;border:1px solid #1a1a1a;"></div>
<div class="cc" style="left:70px;top:431px;width:59px;height:17px;"><span style="left:45.92px;">1</span></div>
<div style="left:129px;top:428px;width:93px;height:20px;background:#fff;border:1px solid #1a1a1a;"></div>
<div class="cc" style="left:130px;top:431px;width:91px;height:17px;"><span class="f" style="left:1px;--w:39.5;">@key1</span></div>
<div style="left:221px;top:428px;width:71px;height:20px;background:#fff;border:1px solid #1a1a1a;"></div>
<div style="left:291px;top:428px;width:87px;height:20px;background:#fff;border:1px solid #1a1a1a;"></div>
<div class="cc" style="left:292px;top:431px;width:85px;height:17px;"><span class="f" style="left:1px;--w:37.5;">10001</span></div>
<div style="left:377px;top:428px;width:52px;height:20px;background:#fff;border:1px solid #1a1a1a;"></div>
<div class="cc" style="left:378px;top:431px;width:50px;height:17px;"><span class="f" style="left:1px;--w:32.5;">本人</span></div>
<div style="left:428px;top:428px;width:150px;height:20px;background:#fff;border:1px solid #1a1a1a;"></div>
<div class="cc" style="left:429px;top:431px;width:148px;height:17px;"><span class="f" style="left:1px;--w:79;">1965/08/01</span></div>
<div style="left:577px;top:428px;width:70px;height:20px;background:#fff;border:1px solid #1a1a1a;"></div>
<div class="cc" style="left:578px;top:431px;width:68px;height:17px;"><span style="left:1px;">+</span></div>
<div style="left:646px;top:428px;width:69px;height:20px;background:#fff;border:1px solid #1a1a1a;"></div>
<div style="left:714px;top:428px;width:171px;height:20px;background:#fff;border:1px solid #1a1a1a;"></div>
<div style="left:884px;top:428px;width:190px;height:20px;background:#fff;border:1px solid #1a1a1a;"></div>
<div class="cc" style="left:885px;top:431px;width:188px;height:17px;"><span class="f" style="left:106px;--w:77;">2023/04/01</span></div>
<div style="left:1073px;top:428px;width:185px;height:20px;background:#fff;border:1px solid #1a1a1a;"></div>
<div style="left:69px;top:447px;width:61px;height:21px;background:#f2f2f2;border:1px solid #1a1a1a;"></div>
<div class="cc" style="left:70px;top:451px;width:59px;height:17px;"><span style="left:45.92px;">2</span></div>
<div style="left:129px;top:447px;width:93px;height:21px;background:#fff;border:1px solid #1a1a1a;"></div>
<div class="cc" style="left:130px;top:451px;width:91px;height:17px;"><span class="f" style="left:1px;--w:39.5;">@key2</span></div>
<div style="left:221px;top:447px;width:71px;height:21px;background:#fff;border:1px solid #1a1a1a;"></div>
<div style="left:291px;top:447px;width:87px;height:21px;background:#fff;border:1px solid #1a1a1a;"></div>
<div class="cc" style="left:292px;top:451px;width:85px;height:17px;"><span class="f" style="left:1px;--w:37.5;">10002</span></div>
<div style="left:377px;top:447px;width:52px;height:21px;background:#fff;border:1px solid #1a1a1a;"></div>
<div class="cc" style="left:378px;top:451px;width:50px;height:17px;"><span class="f" style="left:1px;--w:32.5;">本人</span></div>
<div style="left:428px;top:447px;width:150px;height:21px;background:#fff;border:1px solid #1a1a1a;"></div>
<div class="cc" style="left:429px;top:451px;width:148px;height:17px;"><span class="f" style="left:1px;--w:79;">1971/06/15</span></div>
<div style="left:577px;top:447px;width:70px;height:21px;background:#fff;border:1px solid #1a1a1a;"></div>
<div class="cc" style="left:578px;top:451px;width:68px;height:17px;"><span style="left:1px;">+</span></div>
<div style="left:646px;top:447px;width:69px;height:21px;background:#fff;border:1px solid #1a1a1a;"></div>
<div style="left:714px;top:447px;width:171px;height:21px;background:#fff;border:1px solid #1a1a1a;"></div>
<div style="left:884px;top:447px;width:190px;height:21px;background:#fff;border:1px solid #1a1a1a;"></div>
<div style="left:1073px;top:447px;width:185px;height:21px;background:#fff;border:1px solid #1a1a1a;"></div>
<div style="left:69px;top:467px;width:61px;height:20px;background:#f2f2f2;border:1px solid #1a1a1a;"></div>
<div class="cc" style="left:70px;top:470px;width:59px;height:17px;"><span style="left:45.92px;">3</span></div>
<div style="left:129px;top:467px;width:93px;height:20px;background:#fff;border:1px solid #1a1a1a;"></div>
<div class="cc" style="left:130px;top:470px;width:91px;height:17px;"><span class="f" style="left:1px;--w:39.5;">@key3</span></div>
<div style="left:221px;top:467px;width:71px;height:20px;background:#fff;border:1px solid #1a1a1a;"></div>
<div style="left:291px;top:467px;width:87px;height:20px;background:#fff;border:1px solid #1a1a1a;"></div>
<div class="cc" style="left:292px;top:470px;width:85px;height:17px;"><span class="f" style="left:1px;--w:37.5;">10003</span></div>
<div style="left:377px;top:467px;width:52px;height:20px;background:#fff;border:1px solid #1a1a1a;"></div>
<div class="cc" style="left:378px;top:470px;width:50px;height:17px;"><span class="f" style="left:1px;--w:32.5;">本人</span></div>
<div style="left:428px;top:467px;width:150px;height:20px;background:#fff;border:1px solid #1a1a1a;"></div>
<div class="cc" style="left:429px;top:470px;width:148px;height:17px;"><span class="f" style="left:1px;--w:79;">1989/07/07</span></div>
<div style="left:577px;top:467px;width:70px;height:20px;background:#fff;border:1px solid #1a1a1a;"></div>
<div class="cc" style="left:578px;top:470px;width:68px;height:17px;"><span style="left:1px;">+</span></div>
<div style="left:646px;top:467px;width:69px;height:20px;background:#fff;border:1px solid #1a1a1a;"></div>
<div style="left:714px;top:467px;width:171px;height:20px;background:#fff;border:1px solid #1a1a1a;"></div>
<div style="left:884px;top:467px;width:190px;height:20px;background:#fff;border:1px solid #1a1a1a;"></div>
<div style="left:1073px;top:467px;width:185px;height:20px;background:#fff;border:1px solid #1a1a1a;"></div>
<div style="left:69px;top:486px;width:61px;height:20px;background:#f2f2f2;border:1px solid #1a1a1a;"></div>
<div class="cc" style="left:70px;top:489px;width:59px;height:17px;"><span style="left:45.92px;">4</span></div>
<div style="left:129px;top:486px;width:93px;height:20px;background:#fff;border:1px solid #1a1a1a;"></div>
<div class="cc" style="left:130px;top:489px;width:91px;height:17px;"><span class="f" style="left:1px;--w:39.5;">@key4</span></div>
<div style="left:221px;top:486px;width:71px;height:20px;background:#fff;border:1px solid #1a1a1a;"></div>
<div style="left:291px;top:486px;width:87px;height:20px;background:#fff;border:1px solid #1a1a1a;"></div>
<div class="cc" style="left:292px;top:489px;width:85px;height:17px;"><span class="f" style="left:1px;--w:37.5;">10004</span></div>
<div style="left:377px;top:486px;width:52px;height:20px;background:#fff;border:1px solid #1a1a1a;"></div>
<div class="cc" style="left:378px;top:489px;width:50px;height:17px;"><span class="f" style="left:1px;--w:32.5;">本人</span></div>
<div style="left:428px;top:486px;width:150px;height:20px;background:#fff;border:1px solid #1a1a1a;"></div>
<div class="cc" style="left:429px;top:489px;width:148px;height:17px;"><span class="f" style="left:1px;--w:79;">1987/01/01</span></div>
<div style="left:577px;top:486px;width:70px;height:20px;background:#fff;border:1px solid #1a1a1a;"></div>
<div class="cc" style="left:578px;top:489px;width:68px;height:17px;"><span style="left:1px;">+</span></div>
<div style="left:646px;top:486px;width:69px;height:20px;background:#fff;border:1px solid #1a1a1a;"></div>
<div style="left:714px;top:486px;width:171px;height:20px;background:#fff;border:1px solid #1a1a1a;"></div>
<div style="left:884px;top:486px;width:190px;height:20px;background:#fff;border:1px solid #1a1a1a;"></div>
<div style="left:1073px;top:486px;width:185px;height:20px;background:#fff;border:1px solid #1a1a1a;"></div>
<div style="left:69px;top:505px;width:61px;height:20px;background:#f2f2f2;border:1px solid #1a1a1a;"></div>
<div class="cc" style="left:70px;top:508px;width:59px;height:17px;"><span style="left:45.92px;">5</span></div>
<div style="left:129px;top:505px;width:93px;height:20px;background:#fff;border:1px solid #1a1a1a;"></div>
<div class="cc" style="left:130px;top:508px;width:91px;height:17px;"><span class="f" style="left:1px;--w:39.5;">@key5</span></div>
<div style="left:221px;top:505px;width:71px;height:20px;background:#fff;border:1px solid #1a1a1a;"></div>
<div style="left:291px;top:505px;width:87px;height:20px;background:#fff;border:1px solid #1a1a1a;"></div>
<div class="cc" style="left:292px;top:508px;width:85px;height:17px;"><span class="f" style="left:1px;--w:37.5;">10005</span></div>
<div style="left:377px;top:505px;width:52px;height:20px;background:#fff;border:1px solid #1a1a1a;"></div>
<div class="cc" style="left:378px;top:508px;width:50px;height:17px;"><span class="f" style="left:1px;--w:32.5;">本人</span></div>
<div style="left:428px;top:505px;width:150px;height:20px;background:#fff;border:1px solid #1a1a1a;"></div>
<div class="cc" style="left:429px;top:508px;width:148px;height:17px;"><span class="f" style="left:1px;--w:79;">1990/01/01</span></div>
<div style="left:577px;top:505px;width:70px;height:20px;background:#fff;border:1px solid #1a1a1a;"></div>
<div class="cc" style="left:578px;top:508px;width:68px;height:17px;"><span style="left:1px;">+</span></div>
<div style="left:646px;top:505px;width:69px;height:20px;background:#fff;border:1px solid #1a1a1a;"></div>
<div style="left:714px;top:505px;width:171px;height:20px;background:#fff;border:1px solid #1a1a1a;"></div>
<div style="left:884px;top:505px;width:190px;height:20px;background:#fff;border:1px solid #1a1a1a;"></div>
<div style="left:1073px;top:505px;width:185px;height:20px;background:#fff;border:1px solid #1a1a1a;"></div>
<div style="left:714px;top:261px;width:1px;height:71px;background:#b4b4b4;"></div>
<div style="left:714px;top:280px;width:172px;height:53px;border:2px solid #217346;border-left:none;"></div>
<div style="left:1258px;top:222px;width:21px;height:303px;background:#e6e6e6;"></div>
<div style="left:1258px;top:241px;width:20px;height:269px;background:#d2d2d2;"></div>
<div style="left:1260px;top:224px;width:17px;height:17px;background:#fff;border:1px solid #d8d8d8;"></div>
<svg style="left:1264px;top:230px" width="9" height="5"><path d="M0 5 h9 l-4.500 -4.500 z" fill="#666"/></svg>
<div style="left:1260px;top:241px;width:17px;height:18px;background:#fff;border:1px solid #d8d8d8;"></div>
<div style="left:1260px;top:509px;width:17px;height:16px;background:#fff;border:1px solid #d8d8d8;"></div>
<svg style="left:1264px;top:515px" width="9" height="5"><path d="M0 0 h9 l-4.500 4.500 z" fill="#666"/></svg>
<div style="left:1px;top:525px;width:1278px;height:24px;background:#e6e6e6;"></div>
<svg style="left:22px;top:532px" width="40" height="12"><path d="M8 1 v10 l-5 -5 z" fill="#c2c2c2"/><path d="M27 1 v10 l5 -5 z" fill="#c2c2c2"/></svg>
<div style="left:88px;top:525px;width:89px;height:23px;background:#fff;border-bottom:2px solid #217346;"></div>
<div class="t f" style="left:99.75px;top:527.5px;font-size:15px;color:#217346;--w:64.6;transform-origin:0 0;">登録データ</div>
<div class="t f" style="left:187px;top:527.5px;font-size:15px;color:#444;--w:58;transform-origin:0 0;">入力規則</div>
<div style="left:256px;top:529px;width:1px;height:17px;background:#bdbdbd;"></div>
<svg style="left:284px;top:529px" width="18" height="18" viewBox="0 0 18 18"><circle cx="9" cy="9" r="8" fill="none" stroke="#c6c6c6" stroke-width="1"/><path d="M4.500 9 h9 M9 4.500 v9" stroke="#c6c6c6" stroke-width="1.200"/></svg>
<div style="left:600px;top:529px;width:657px;height:19px;background:#d2d2d2;"></div>
<div style="left:963px;top:530px;width:18px;height:17px;background:#fff;border:1px solid #d8d8d8;"></div>
<div style="left:1241px;top:530px;width:16px;height:17px;background:#fff;border:1px solid #d8d8d8;"></div>
<svg style="left:1247px;top:534px" width="5" height="9"><path d="M0 0 v9 l4.500 -4.500 z" fill="#666"/></svg>
<div style="left:1px;top:549px;width:1278px;height:25px;background:#f3f3f3;"></div>
<div class="t f" style="left:7px;top:555px;font-size:13px;color:#333;--w:51;transform-origin:0 0;">準備完了</div>
<div style="left:890.5px;top:556px;width:1.5px;height:11.5px;background:#666;"></div>
<div class="t f" style="left:895px;top:555.5px;font-size:13px;color:#333;--w:51;transform-origin:0 0;">表示設定</div>
<div style="left:966px;top:550px;width:35px;height:24px;background:#c6c6c6;"></div>
<svg style="left:976px;top:555px" width="16" height="15" viewBox="0 0 16 15"><rect x="0.500" y="0.500" width="14" height="13" fill="none" stroke="#555"/><path d="M0.500 5 h14 M0.500 9.500 h14 M5 0.500 v13 M10 0.500 v13" stroke="#555"/></svg>
<svg style="left:1012px;top:555px" width="16" height="15" viewBox="0 0 16 15"><rect x="0.500" y="0.500" width="14" height="13" fill="none" stroke="#666"/><rect x="3.500" y="3.500" width="8" height="7" fill="none" stroke="#666"/><path d="M5.500 6 h4 M5.500 8 h4" stroke="#888"/></svg>
<svg style="left:1048px;top:555px" width="16" height="15" viewBox="0 0 16 15"><rect x="0.500" y="0.500" width="14" height="13" fill="none" stroke="#666"/><path d="M0.500 8.500 h14 M5.500 0.500 v8 M9.500 0.500 v8" stroke="#666" fill="none"/></svg>
<div style="left:1080px;top:561px;width:8px;height:2px;background:#555;"></div>
<div style="left:1092px;top:561.5px;width:108px;height:1px;background:#a6a6a6;"></div>
<div style="left:1143px;top:555px;width:6px;height:14px;background:#666;"></div>
<div style="left:1204px;top:561px;width:9px;height:2px;background:#555;"></div>
<div style="left:1207.5px;top:557.5px;width:2px;height:9px;background:#555;"></div>
<div id="f1" class="t f" style="left:1224.7px;top:556px;font-size:13px;color:#333;--w:35;transform-origin:0 0;transform:scaleX(1.0526);">100%</div>
<div style="left:0px;top:0px;width:1280px;height:575px;border:1px solid #217346;border-top:none;background:transparent;pointer-events:none;"></div>
<div style="left:588px;top:332px;width:303px;height:435px;background:#fff;border:1px solid #c6c6c6;box-shadow:1px 1px 3px rgba(0,0,0,.18);"></div>
<svg style="left:594px;top:339px" width="16" height="18" viewBox="0 0 16 18"><text x="0" y="7.500" font-size="8.500" font-weight="bold" font-family="Liberation Sans" fill="#2e75b6">A</text><text x="0" y="15.500" font-size="8.500" font-weight="bold" font-family="Liberation Sans" fill="#8e44ad">Z</text><path d="M11.500 1.500 v13 M8.500 11.500 l3 3 l3 -3" fill="none" stroke="#555" stroke-width="1.100"/></svg>
<div class="t f" style="left:621px;top:341.5px;font-size:12.500px;color:#444;--w:46;transform-origin:0 0;">昇順(<span style="text-decoration:underline">S</span>)</div>
<svg style="left:594px;top:365px" width="16" height="18" viewBox="0 0 16 18"><text x="0" y="7.500" font-size="8.500" font-weight="bold" font-family="Liberation Sans" fill="#8e44ad">Z</text><text x="0" y="15.500" font-size="8.500" font-weight="bold" font-family="Liberation Sans" fill="#2e75b6">A</text><path d="M11.500 1.500 v13 M8.500 11.500 l3 3 l3 -3" fill="none" stroke="#555" stroke-width="1.100"/></svg>
<div class="t f" style="left:621px;top:367.0px;font-size:12.500px;color:#444;--w:47;transform-origin:0 0;">降順(<span style="text-decoration:underline">O</span>)</div>
<div class="t f" style="left:621px;top:392.5px;font-size:12.500px;color:#444;--w:90.7;transform-origin:0 0;">色で並べ替え(<span style="text-decoration:underline">T</span>)</div>
<div style="left:621px;top:412px;width:268px;height:1px;background:#e2e2e2;"></div>
<svg style="left:593px;top:418px" width="18" height="18" viewBox="0 0 18 18"><path d="M0.500 1 h11 l-4 5 v6 h-3 v-6 z" fill="#c2c2c2"/><path d="M9 9.500 l6 6 M15 9.500 l-6 6" stroke="#c2c2c2" stroke-width="1.500"/></svg>
<div class="t f" style="left:621px;top:421.0px;font-size:12.500px;color:#b0b0b0;--w:245;transform-origin:0 0;">"健康保険 加入区分" からフィルターをクリア(<span style="text-decoration:underline">C</span>)</div>
<div class="t f" style="left:621px;top:448.0px;font-size:12.500px;color:#444;--w:74.6;transform-origin:0 0;">色フィルター(<span style="text-decoration:underline">I</span>)</div>
<div class="t f" style="left:621px;top:474.5px;font-size:12.500px;color:#444;--w:107.4;transform-origin:0 0;">テキスト フィルター(<span style="text-decoration:underline">F</span>)</div>
<svg style="left:877px;top:395.5px" width="5" height="8"><path d="M0 0 v7 l4 -3.500 z" fill="#555"/></svg>
<svg style="left:877px;top:451.0px" width="5" height="8"><path d="M0 0 v7 l4 -3.500 z" fill="#555"/></svg>
<svg style="left:877px;top:477.5px" width="5" height="8"><path d="M0 0 v7 l4 -3.500 z" fill="#555"/></svg>
<div style="left:621px;top:493.5px;width:268px;height:1px;background:#e2e2e2;"></div>
<div style="left:618px;top:499px;width:269px;height:22px;background:#fff;border:1px solid #ababab;"></div>
<div class="t f" style="left:621px;top:503.5px;font-size:12.500px;color:#777;--w:26;transform-origin:0 0;">検索</div>
<svg style="left:868px;top:502px" width="17" height="17" viewBox="0 0 17 17"><circle cx="10.500" cy="6.500" r="4.700" fill="none" stroke="#2e75b6" stroke-width="1.500"/><path d="M7 10 l-5.500 5.500" stroke="#2e75b6" stroke-width="2"/></svg>
<div style="left:618px;top:525px;width:268px;height:183px;background:#fff;border:1px solid #e0e0e0;"></div>
<div style="left:630px;top:537px;width:1px;height:68px;background:#b4b4b4;"></div>
<div style="left:630px;top:536.5px;width:9px;height:1px;background:#b4b4b4;"></div>
<div style="left:639px;top:531.0px;width:11px;height:11px;background:#fff;border:1px solid #666;"></div>
<div style="left:641.5px;top:533.5px;width:6px;height:6px;background:#222;"></div>
<div class="t f" style="left:653.8px;top:529.5px;font-size:13px;color:#111;--w:77;transform-origin:0 0;">(すべて選択)</div>
<div style="left:630px;top:559.5px;width:9px;height:1px;background:#b4b4b4;"></div>
<div style="left:652px;top:551.0px;width:80px;height:17px;background:#e8e8e8;"></div>
<div style="left:639px;top:554.0px;width:11px;height:11px;background:#fff;border:1px solid #666;"></div>
<svg style="left:640px;top:555.0px" width="9" height="9" viewBox="0 0 9 9"><path d="M1.500 4.500 l2.200 2.300 l3.800 -4.800" fill="none" stroke="#111" stroke-width="1.500"/></svg>
<div class="t f" style="left:653.8px;top:552.5px;font-size:13px;color:#111;--w:78;transform-origin:0 0;">加入している</div>
<div style="left:630px;top:582px;width:9px;height:1px;background:#b4b4b4;"></div>
<div style="left:639px;top:576.5px;width:11px;height:11px;background:#fff;border:1px solid #666;"></div>
<div class="t f" style="left:653.8px;top:575px;font-size:13px;color:#111;--w:25;transform-origin:0 0;">選択</div>
<div style="left:630px;top:604.5px;width:9px;height:1px;background:#b4b4b4;"></div>
<div style="left:639px;top:599.0px;width:11px;height:11px;background:#fff;border:1px solid #666;"></div>
<div class="t f" style="left:653.8px;top:597.5px;font-size:13px;color:#111;--w:63.6;transform-origin:0 0;">(空白セル)</div>
<div style="left:723px;top:729px;width:76px;height:25px;background:#fff;border:1px solid #3b8ad9;border-radius:3px;"></div>
<div id="f2" class="t f" style="left:751.5px;top:736.5px;font-size:12.500px;color:#111;--w:18.5;transform-origin:0 0;transform:scaleX(1.0242);">OK</div>
<div style="left:811px;top:728.5px;width:75px;height:25px;background:#fdfdfd;border:1px solid #d0d0d0;border-radius:4px;"></div>
<div class="t f" style="left:823px;top:736px;font-size:12.500px;color:#111;--w:50;transform-origin:0 0;">キャンセル</div>
<div style="left:589px;top:758px;width:301px;height:1px;background:#e6e6e6;"></div>
<div style="left:886px;top:757px;width:1.5px;height:1.5px;background:#9a9a9a;"></div>
<div style="left:883px;top:760px;width:1.5px;height:1.5px;background:#9a9a9a;"></div>
<div style="left:886px;top:760px;width:1.5px;height:1.5px;background:#9a9a9a;"></div>
<div style="left:880px;top:763px;width:1.5px;height:1.5px;background:#9a9a9a;"></div>
<div style="left:883px;top:763px;width:1.5px;height:1.5px;background:#9a9a9a;"></div>
<div style="left:886px;top:763px;width:1.5px;height:1.5px;background:#9a9a9a;"></div>
<div style="left:860.5px;top:306.5px;width:28.5px;height:29.0px;border:4.5px solid #fa0505;"></div>
<svg style="left:842.5px;top:277.0px" width="29.0" height="29.0" viewBox="0 0 29.0 29.0"><circle cx="14.5" cy="14.5" r="12.8" fill="none" stroke="#fa0505" stroke-width="1.700"/><text x="14.5" y="24.0" text-anchor="middle" font-size="23.500" font-weight="bold" font-family="Liberation Sans" fill="#fa0505">1</text></svg>
<div style="left:626.5px;top:546.5px;width:117.5px;height:27.5px;border:5.3px solid #fa0505;"></div>
<svg style="left:594.2px;top:545.2px" width="30.6" height="30.6" viewBox="0 0 30.6 30.6"><circle cx="15.3" cy="15.3" r="13.600000000000001" fill="none" stroke="#fa0505" stroke-width="1.700"/><text x="15.3" y="24.8" text-anchor="middle" font-size="23.500" font-weight="bold" font-family="Liberation Sans" fill="#fa0505">2</text></svg>
<div style="left:717.5px;top:723.8px;width:86.5px;height:36.0px;border:5.3px solid #fa0505;"></div>
<svg style="left:686.5px;top:725.5px" width="31.0" height="31.0" viewBox="0 0 31.0 31.0"><circle cx="15.5" cy="15.5" r="13.8" fill="none" stroke="#fa0505" stroke-width="1.700"/><text x="15.5" y="25.0" text-anchor="middle" font-size="23.500" font-weight="bold" font-family="Liberation Sans" fill="#fa0505">3</text></svg>
<script>
(function(){var a=document.querySelectorAll('.f');for(var i=0;i<a.length;i++){var e=a[i];var w=parseFloat(getComputedStyle(e).getPropertyValue('--w'));if(!(w>0))continue;e.style.transform='none';var n=e.getBoundingClientRect().width;if(n>0)e.style.transform='scaleX('+(w/n).toFixed(4)+')';}})();
</script>
</body></html>
